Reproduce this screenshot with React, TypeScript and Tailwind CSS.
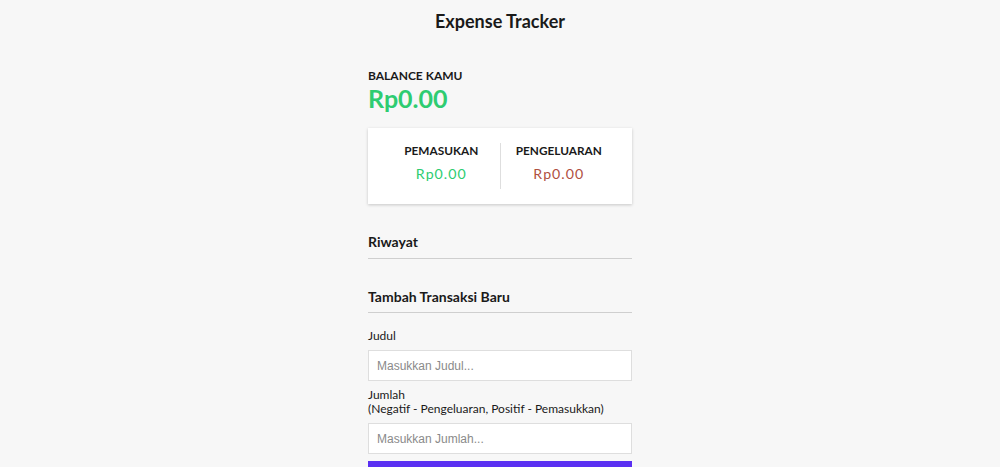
import React from "react";

export default function App() {
  const lato = { fontFamily: "Lato, 'Noto Sans', sans-serif" };
  const arial = { fontFamily: "'Liberation Sans', Arial, sans-serif" };
  return (
    <div className="min-h-[467px] w-full bg-[#f7f7f7] text-[#111]" style={lato}>
      <h2 className="pt-[9px] text-center text-[18px] leading-[24px] font-bold text-[#1a1a1a]">
        Expense Tracker
      </h2>
      <div className="mx-auto w-[264px]">
        <h4 className="mt-[35px] text-[12px] leading-[16px] font-bold uppercase text-[#1a1a1a]">Balance Kamu</h4>
        <h1 className="text-[25px] leading-[28px] font-bold text-[#2ecc71]">Rp0.00</h1>
        <div className="mt-[16px] flex bg-white px-[15px] py-[15px] shadow-[0_1px_3px_rgba(0,0,0,0.2)]">
          <div className="flex flex-1 flex-col items-center border-r border-[#dedede]">
            <h4 className="text-[11.8px] leading-[16px] font-bold uppercase text-[#1a1a1a]">Pemasukan</h4>
            <p className="mt-[5px] mb-[5px] text-[14.2px] leading-[20px] tracking-[1px] text-[#2ecc71]">Rp0.00</p>
          </div>
          <div className="flex flex-1 flex-col items-center">
            <h4 className="text-[11.8px] leading-[16px] font-bold uppercase text-[#1a1a1a]">Pengeluaran</h4>
            <p className="mt-[5px] mb-[5px] text-[14.2px] leading-[20px] tracking-[1px] text-[#b0503f]">Rp0.00</p>
          </div>
        </div>
        <h3 className="mt-[28px] border-b border-[#cfcfcf] pb-[6px] text-[14px] leading-[20px] font-bold text-[#1a1a1a]">Riwayat</h3>
        <h3 className="mt-[28px] border-b border-[#cfcfcf] pb-[5px] text-[14px] leading-[20px] font-bold text-[#1a1a1a]">Tambah Transaksi Baru</h3>
        <label className="mt-[15px] block text-[12px] leading-[16px] text-[#1a1a1a]">Judul</label>
        <input
          className="mt-[6px] block h-[31px] w-full border border-[#dedede] bg-white px-[8px] text-[12px] outline-none placeholder:text-[#8a8a8a]"
          style={arial}
          placeholder="Masukkan Judul..."
        />
        <label className="mt-[7px] block text-[12px] leading-[14px] text-[#1a1a1a]">
          Jumlah
          <br />
          (Negatif - Pengeluaran, Positif - Pemasukkan)
        </label>
        <input
          className="mt-[7px] block h-[31px] w-full border border-[#dedede] bg-white px-[8px] text-[12px] outline-none placeholder:text-[#8a8a8a]"
          style={arial}
          placeholder="Masukkan Jumlah..."
        />
        <button className="mt-[7px] mb-[30px] block h-[40px] w-full bg-[#5a2ff2] text-[14px] text-white">Tambah Transaksi</button>
      </div>
    </div>
  );
}
